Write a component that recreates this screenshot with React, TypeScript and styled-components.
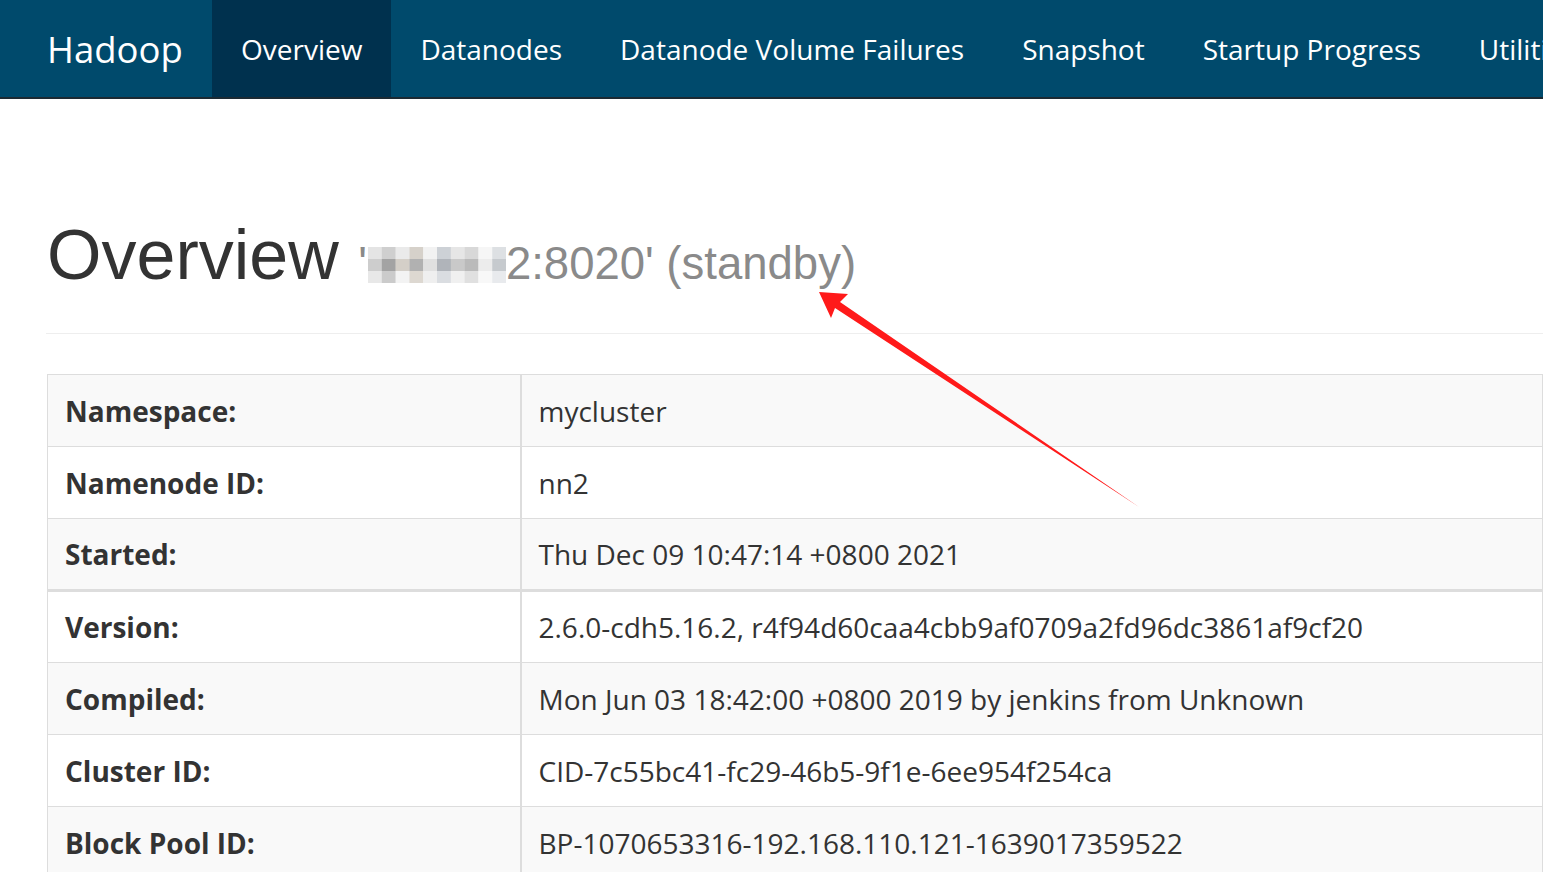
import React from 'react';
import styled, { createGlobalStyle } from 'styled-components';

const GlobalStyle = createGlobalStyle`
  html, body {
    margin: 0;
    padding: 0;
    background: #fff;
  }
  body {
    color: #333;
    font-family: 'Open Sans', 'Noto Sans', sans-serif;
  }
`;

const Page = styled.div`
  width: 1543px;
  height: 872px;
  overflow: hidden;
  position: relative;
`;

const Navbar = styled.nav`
  display: flex;
  align-items: stretch;
  height: 97px;
  background: #004a6c;
  border-bottom: 2px solid #1c2a33;
  padding-left: 18px;
  white-space: nowrap;
  overflow: hidden;
`;

const Brand = styled.div`
  display: flex;
  flex-shrink: 0;
  align-items: center;
  width: 194px;
  box-sizing: border-box;
  padding-left: 29px;
  color: #fff;
  font-size: 36.5px;
`;

const NavItem = styled.div<{ active?: boolean }>`
  display: flex;
  flex-shrink: 0;
  align-items: center;
  padding: 0 29px;
  color: #fff;
  font-size: 28px;
  background: ${({ active }) => (active ? '#00314e' : 'transparent')};
`;

const Container = styled.div`
  padding-left: 46px;
`;

const PageHeader = styled.div`
  margin-top: 118px;
  padding-bottom: 39px;
  margin-bottom: 40px;
  border-bottom: 1px solid #eee;
`;

const Heading = styled.h1`
  margin: 0;
  padding-left: 1px;
  font-family: 'Liberation Sans', Arial, sans-serif;
  font-weight: 400;
  font-size: 70px;
  line-height: 1.1;
  color: #333;
`;

const Sub = styled.small`
  font-size: 45.5px;
  color: #8a8a8a;
`;

const Mosaic = styled.svg`
  display: inline-block;
  vertical-align: -4px;
  margin-left: 1px;
`;

const Table = styled.table`
  margin-left: 1px;
  width: calc(100% - 1px);
  border-collapse: collapse;
  font-size: 28px;
`;

const Body = styled.tbody`
  & + & {
    border-top: 3px solid #ddd;
  }
`;

const Row = styled.tr<{ striped?: boolean }>`
  background: ${({ striped }) => (striped ? '#f9f9f9' : '#fff')};
`;

const Label = styled.th`
  width: 473px;
  height: 72px;
  box-sizing: border-box;
  padding: 0 17px;
  border: 1px solid #ddd;
  border-right-width: 2px;
  text-align: left;
  font-weight: 700;
  color: #333;
`;

const Value = styled.td`
  padding: 0 17px;
  border: 1px solid #ddd;
  color: #333;
  white-space: nowrap;
`;

const Arrow = styled.svg`
  position: absolute;
  left: 0;
  top: 0;
  pointer-events: none;
`;

const groups: [string, string][][] = [
  [
    ['Namespace:', 'mycluster'],
    ['Namenode ID:', 'nn2'],
    ['Started:', 'Thu Dec 09 10:47:14 +0800 2021'],
  ],
  [
    ['Version:', '2.6.0-cdh5.16.2, r4f94d60caa4cbb9af0709a2fd96dc3861af9cf20'],
    ['Compiled:', 'Mon Jun 03 18:42:00 +0800 2019 by jenkins from Unknown'],
    ['Cluster ID:', 'CID-7c55bc41-fc29-46b5-9f1e-6ee954f254ca'],
    ['Block Pool ID:', 'BP-1070653316-192.168.110.121-1639017359522'],
  ],
];

const mosaicCells = [
  '#e4e4e4', '#cfcfcf', '#eaeaea', '#d6d1ca', '#f2f2f2', '#cdd1d6', '#e6e6e6', '#d8d8d8', '#f6f6f6', '#dde0e3',
  '#cdcdcd', '#a3a3a3', '#d4cfc8', '#b1b1b1', '#e0e0e0', '#b0b4ba', '#c9c9c9', '#bababa', '#ececec', '#c6cace',
  '#e8e8e8', '#cbcbcb', '#f3f3f3', '#ddd8d1', '#efefef', '#dadde1', '#f0f0f0', '#e0e0e0', '#f8f8f8', '#e8eaed',
];

const App: React.FC = () => {
  let index = 0;
  return (
    <Page>
      <GlobalStyle />
      <Navbar>
        <Brand>Hadoop</Brand>
        <NavItem active>Overview</NavItem>
        <NavItem>Datanodes</NavItem>
        <NavItem>Datanode Volume Failures</NavItem>
        <NavItem>Snapshot</NavItem>
        <NavItem>Startup Progress</NavItem>
        <NavItem>Utilities</NavItem>
      </Navbar>
      <Container>
        <PageHeader>
          <Heading>
            Overview{' '}
            <Sub>
              '
              <Mosaic width="138" height="36" viewBox="0 0 10 3" preserveAspectRatio="none">
                {mosaicCells.map((c, i) => (
                  <rect key={i} x={i % 10} y={Math.floor(i / 10)} width="1.02" height="1.02" fill={c} />
                ))}
              </Mosaic>
              2:8020' (standby)
            </Sub>
          </Heading>
        </PageHeader>
        <Table>
          {groups.map((rows, g) => (
            <Body key={g}>
              {rows.map(([label, value]) => {
                const striped = index++ % 2 === 0;
                return (
                  <Row key={label} striped={striped}>
                    <Label>{label}</Label>
                    <Value>{value}</Value>
                  </Row>
                );
              })}
            </Body>
          ))}
        </Table>
      </Container>
      <Arrow width="1543" height="872" viewBox="0 0 1543 872">
        <polygon
          points="819,292 848,294 840,302 1139,507 835,308 831,318"
          fill="#ff1a1a"
        />
      </Arrow>
    </Page>
  );
};

export default App;
